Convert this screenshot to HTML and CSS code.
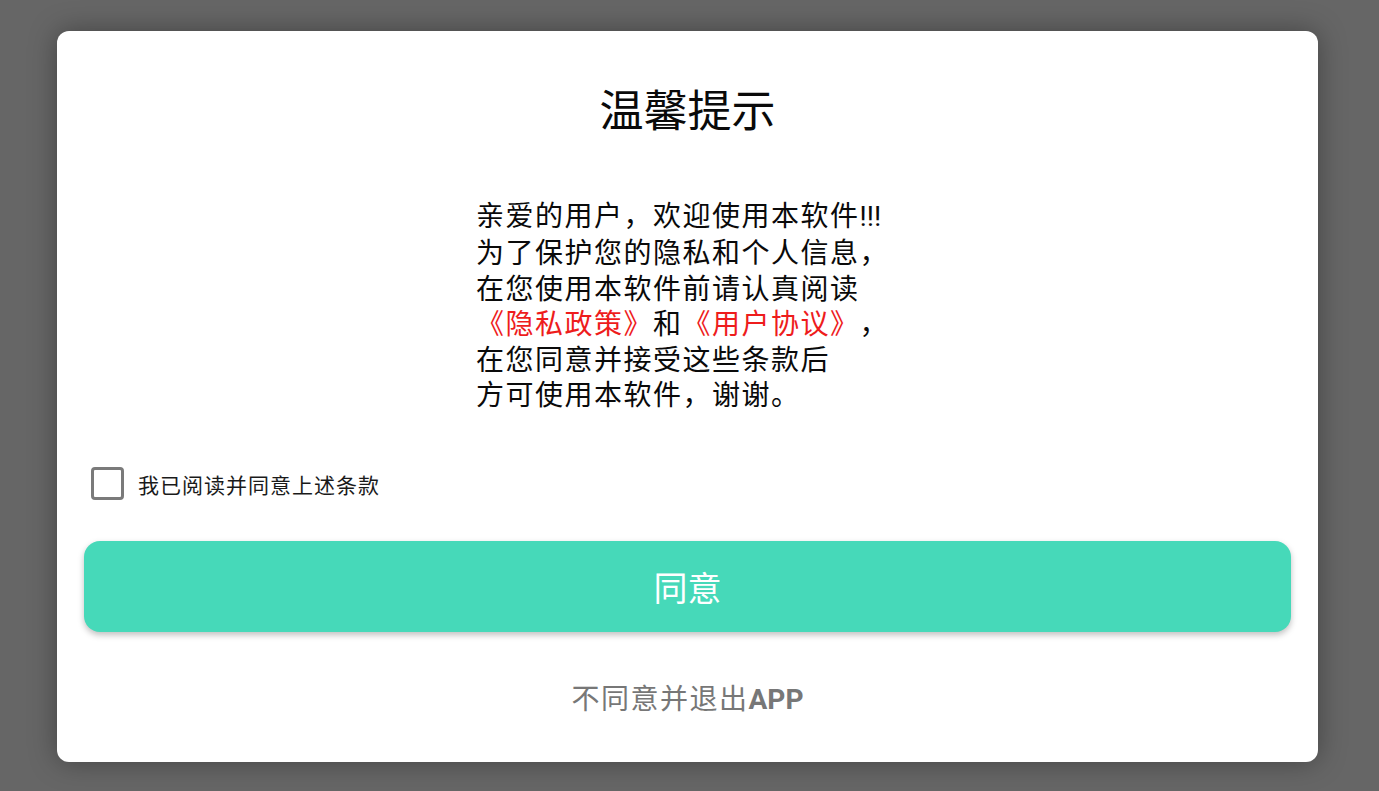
FILE: index.html
```html
<!DOCTYPE html>
<html lang="zh-CN">
<head>
<meta charset="utf-8">
<title>温馨提示</title>
<link rel="stylesheet" href="styles.css">
</head>
<body>
<div class="card">
  <h1 class="title">温馨提示</h1>
  <div class="body-wrap">
    <p class="body-text">亲爱的用户，欢迎使用本软件<span class="latin">!!!</span><br>为了保护您的隐私和个人信息，<br>在您使用本软件前请认真阅读<br><span class="link">《隐私政策》</span>和<span class="link">《用户协议》</span>，<br>在您同意并接受这些条款后<br>方可使用本软件，谢谢。</p>
  </div>
  <label class="agree-row">
    <span class="checkbox"></span>
    <span class="agree-text">我已阅读并同意上述条款</span>
  </label>
  <button class="btn-agree">同意</button>
  <div class="btn-exit">不同意并退出<span class="app">APP</span></div>
</div>
</body>
</html>
```

FILE: styles.css
```css
html, body {
  margin: 0;
  padding: 0;
  height: 100%;
}
body {
  background: #666666;
  font-family: "Noto Sans CJK SC", "Noto Sans", sans-serif;
  overflow: hidden;
  text-spacing-trim: space-all;
}
.card {
  box-sizing: border-box;
  margin: 31px 0 0 57px;
  width: 1261px;
  height: 731px;
  background: #ffffff;
  border-radius: 12px;
  box-shadow: 0 0 28px rgba(0, 0, 0, 0.35);
  padding: 52px 27px 0;
  display: flex;
  flex-direction: column;
}
.title {
  margin: 0;
  font-size: 44px;
  font-weight: 400;
  line-height: 50px;
  color: #0a0a0a;
  text-align: center;
}
.body-wrap {
  margin-top: 64px;
  display: flex;
  justify-content: center;
  padding-right: 10px;
}
.body-text {
  margin: 0;
  font-size: 28px;
  letter-spacing: 1.5px;
  line-height: 35.4px;
  color: #0a0a0a;
}
.latin {
  font-family: Roboto, sans-serif;
  letter-spacing: 0;
}
.link {
  color: #ee1c1c;
}
.agree-row {
  margin-top: 56px;
  display: flex;
  align-items: center;
  padding-left: 7px;
  gap: 14px;
}
.checkbox {
  box-sizing: border-box;
  width: 33px;
  height: 33px;
  border: 3px solid #7a7a7a;
  border-radius: 4px;
}
.agree-text {
  font-size: 21px;
  letter-spacing: 1px;
  color: #1a1a1a;
}
.btn-agree {
  margin-top: 41px;
  height: 91px;
  border: none;
  border-radius: 16px;
  background: #46d9b9;
  color: #fff;
  font-family: inherit;
  font-size: 34px;
  box-shadow: 0 3px 6px rgba(0, 0, 0, 0.25);
}
.btn-exit {
  margin-top: 45px;
  text-align: center;
  font-size: 28px;
  letter-spacing: 1.5px;
  line-height: 40px;
  color: #777;
}
.app {
  font-family: Roboto, sans-serif;
  font-weight: 700;
  letter-spacing: 0;
}
```
